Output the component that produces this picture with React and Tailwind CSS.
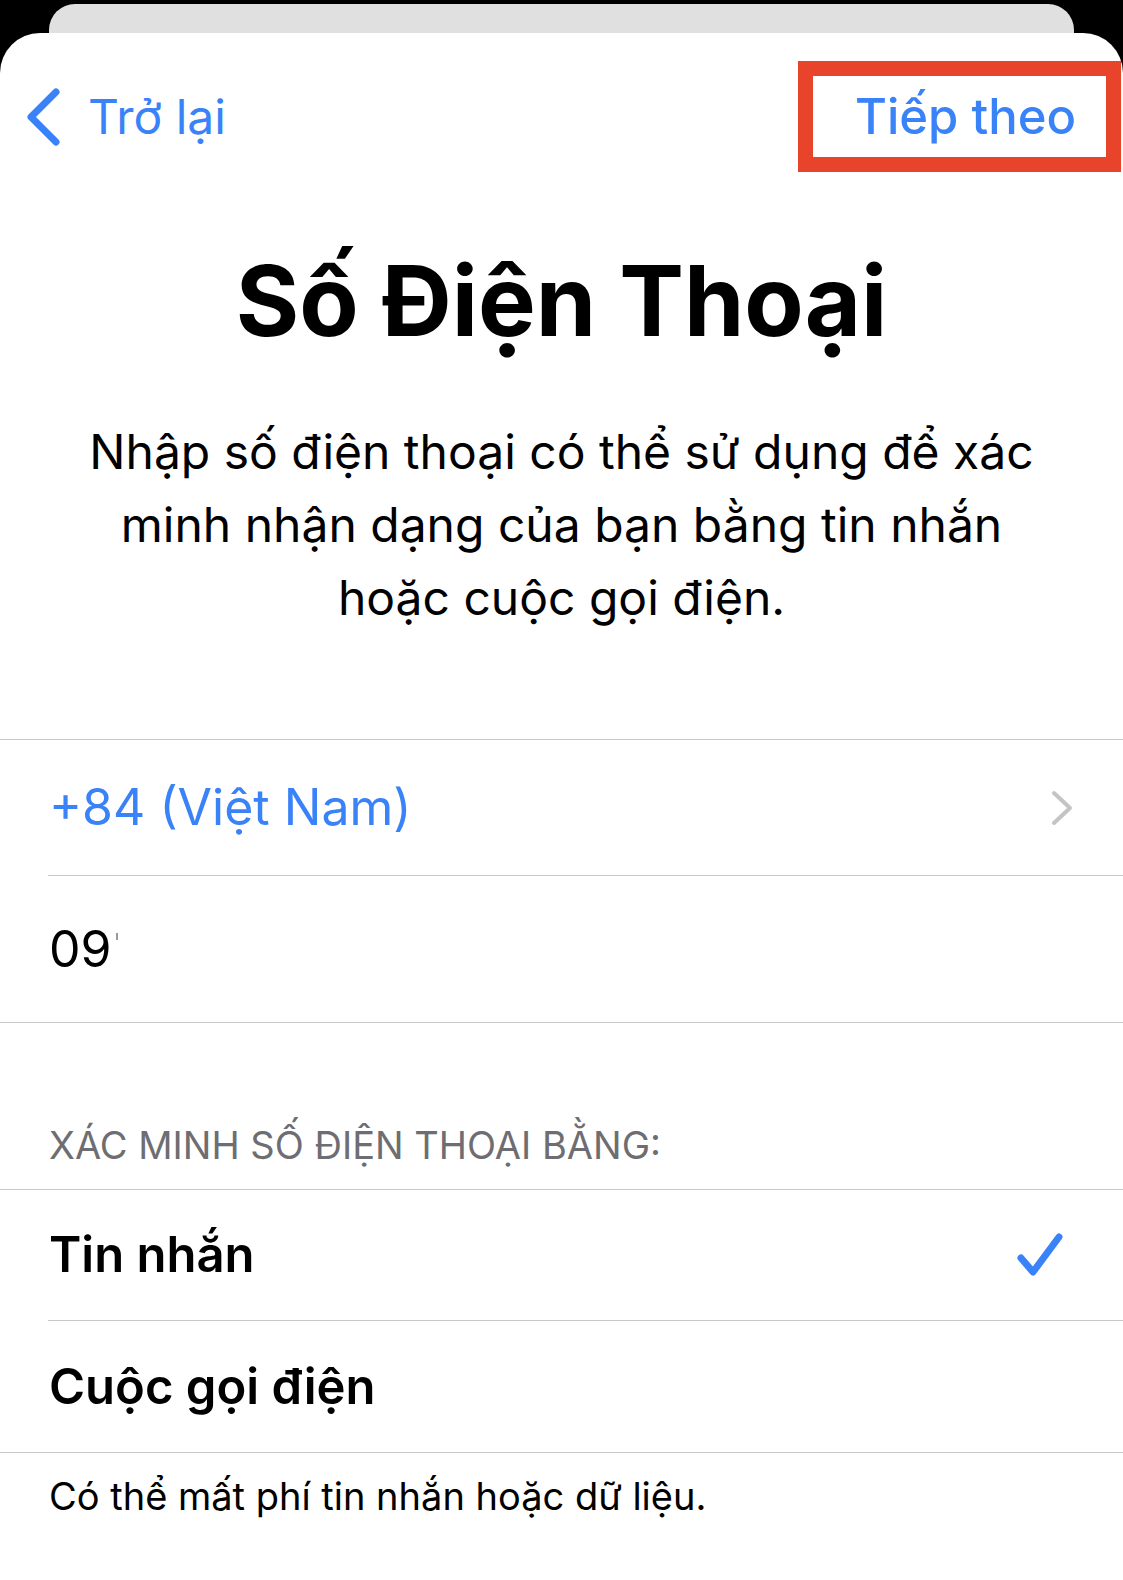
const blue = 'text-[#3a82f7]';

function Divider({ inset = false }) {
  return <div className={`h-px bg-[#c8c7cc] ${inset ? 'ml-[48px]' : ''}`} />;
}

function BackChevron() {
  return (
    <svg width="36" height="58" viewBox="0 0 36 58" fill="none">
      <path d="M31 4 L6 29 L31 54" stroke="#3a82f7" strokeWidth="7" strokeLinecap="round" strokeLinejoin="round" />
    </svg>
  );
}

function RowChevron() {
  return (
    <svg width="24" height="36" viewBox="0 0 24 36" fill="none">
      <path d="M4 3 L20 18 L4 33" stroke="#c4c4c7" strokeWidth="4" strokeLinecap="round" strokeLinejoin="round" />
    </svg>
  );
}

function Check() {
  return (
    <svg width="50" height="48" viewBox="0 0 50 48" fill="none">
      <path d="M6 27 L18 41 L44 6" stroke="#3a82f7" strokeWidth="7" strokeLinecap="round" strokeLinejoin="round" />
    </svg>
  );
}

export default function App() {
  return (
    <div className="min-h-[1580px] bg-black font-['Inter','Noto_Sans',sans-serif] flex flex-col">
      <div className="pt-[4px] px-[49px]">
        <div className="h-[29px] rounded-t-[26px] bg-[#e0e0e0]" />
      </div>
      <div className="flex-1 bg-white rounded-t-[40px]">
        <div className="flex items-center justify-between pt-[28px] pr-[2px]">
          <div className={`flex items-center pl-[25px] ${blue}`}>
            <BackChevron />
            <span className="ml-[27px] text-[48px] leading-none">Trở lại</span>
          </div>
          <div className="w-[323px] h-[111px] border-[15px] border-[#e8432b] flex items-center pl-[42px]">
            <span className={`text-[49px] leading-none font-medium ${blue}`}>Tiếp theo</span>
          </div>
        </div>

        <h1 className="mt-[80px] text-center text-[97px] font-bold leading-none text-black">
          Số Điện Thoại
        </h1>

        <p className="mt-[66px] text-center text-[48px] leading-[73px] text-black">
          Nhập số điện thoại có thể sử dụng để xác<br />
          minh nhận dạng của bạn bằng tin nhắn<br />
          hoặc cuộc gọi điện.
        </p>

        <div className="mt-[105px]">
          <Divider />
          <div className="h-[135px] flex items-center justify-between pl-[49px] pr-[49px]">
            <span className={`text-[50px] ${blue}`}>+84 (Việt Nam)</span>
            <RowChevron />
          </div>
          <Divider inset />
          <div className="h-[146px] flex items-center pl-[49px]">
            <span className="text-[50px] text-black">09</span>
            <span className="ml-[4px] mb-[26px] w-[2px] h-[7px] bg-[#9a9a9a]" />
          </div>
          <Divider />
        </div>

        <div className="pt-[103px] pb-[25px] pl-[49px] text-[38px] text-[#6d6d72] uppercase leading-none">
          Xác minh số điện thoại bằng:
        </div>
        <Divider />
        <div className="h-[130px] flex items-center justify-between pl-[49px] pr-[58px]">
          <span className="text-[49px] font-semibold text-black">Tin nhắn</span>
          <Check />
        </div>
        <Divider inset />
        <div className="h-[131px] flex items-center pl-[49px]">
          <span className="text-[49px] font-semibold text-black">Cuộc gọi điện</span>
        </div>
        <Divider />
        <p className="pt-[20px] pl-[49px] text-[38px] text-black leading-tight">
          Có thể mất phí tin nhắn hoặc dữ liệu.
        </p>
      </div>
    </div>
  );
}
